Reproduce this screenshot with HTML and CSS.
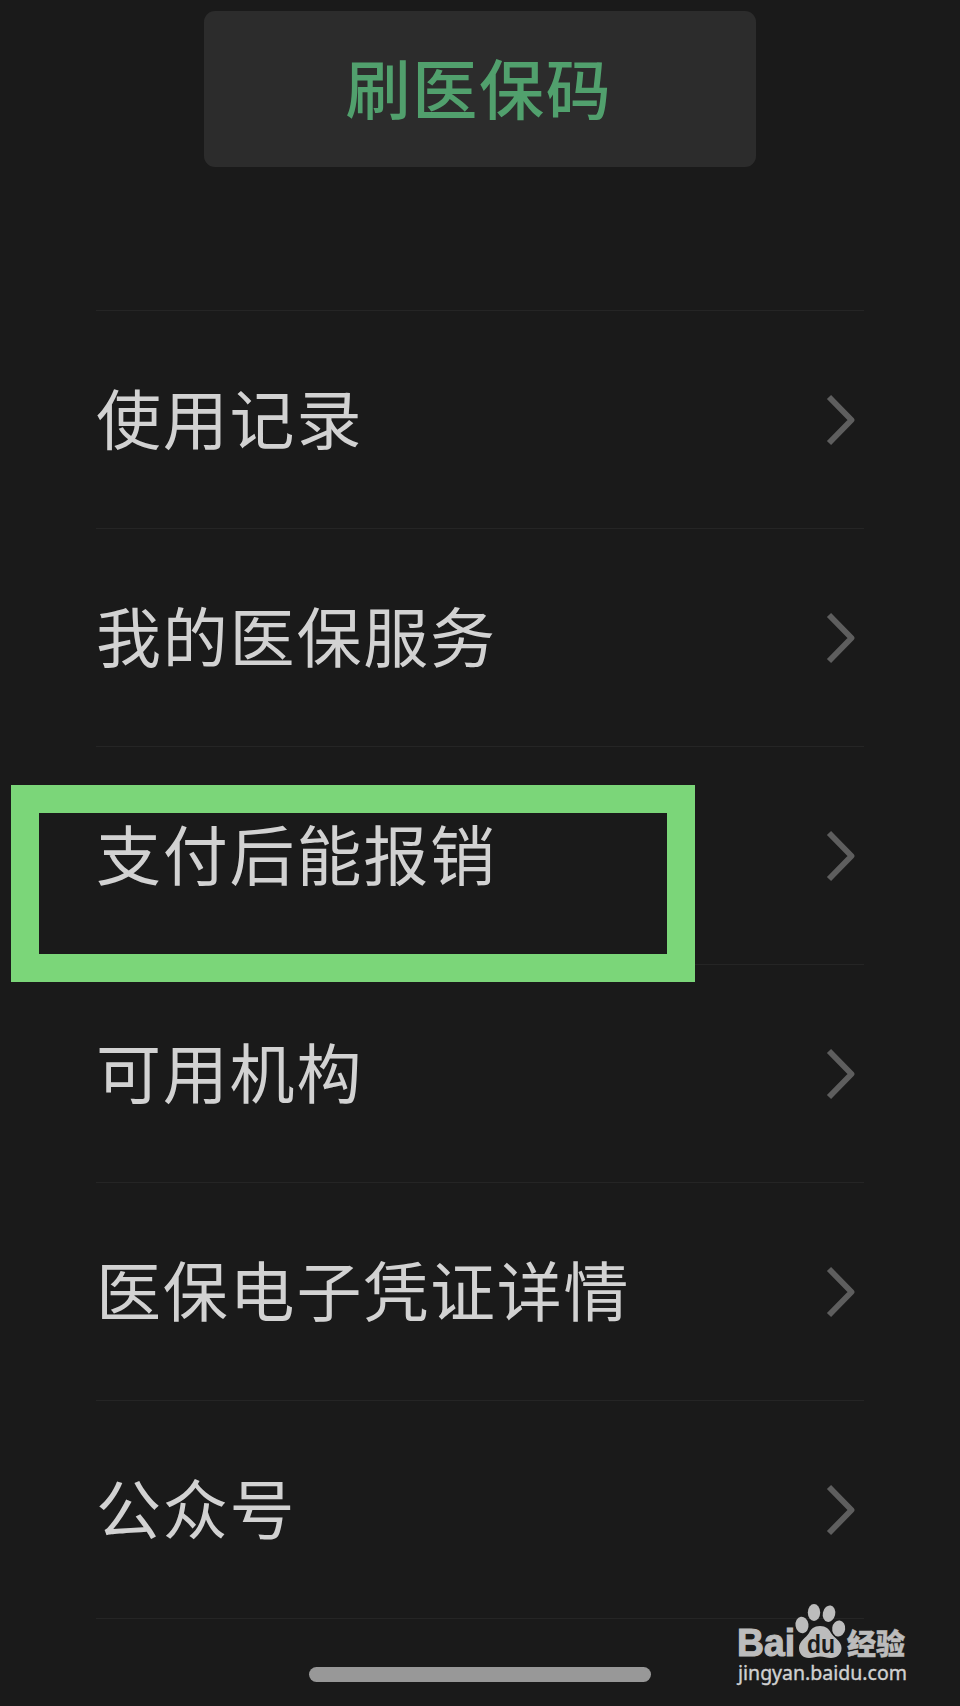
FILE: index.html
```html
<!DOCTYPE html>
<html lang="zh-CN">
<head>
    <meta charset="UTF-8">
    <title>医保电子凭证</title>
    <link rel="stylesheet" href="styles.css">
</head>
<body>
    <div class="page">
        <button type="button" class="scan-btn">刷医保码</button>

        <!-- Menu -->
        <ul class="menu">
            <li class="menu-item">
                <span class="label">使用记录</span>
                <svg class="arrow" viewBox="0 0 30 52"><path d="M3 3 L25.5 26 L3 49"/></svg>
            </li>
            <li class="menu-item">
                <span class="label">我的医保服务</span>
                <svg class="arrow" viewBox="0 0 30 52"><path d="M3 3 L25.5 26 L3 49"/></svg>
            </li>
            <li class="menu-item">
                <span class="label">支付后能报销</span>
                <svg class="arrow" viewBox="0 0 30 52"><path d="M3 3 L25.5 26 L3 49"/></svg>
                <div class="highlight"></div>
            </li>
            <li class="menu-item">
                <span class="label">可用机构</span>
                <svg class="arrow" viewBox="0 0 30 52"><path d="M3 3 L25.5 26 L3 49"/></svg>
            </li>
            <li class="menu-item">
                <span class="label">医保电子凭证详情</span>
                <svg class="arrow" viewBox="0 0 30 52"><path d="M3 3 L25.5 26 L3 49"/></svg>
            </li>
            <li class="menu-item">
                <span class="label">公众号</span>
                <svg class="arrow" viewBox="0 0 30 52"><path d="M3 3 L25.5 26 L3 49"/></svg>
            </li>
        </ul>

        <div class="home-bar"></div>

        <!-- Watermark -->
        <svg class="watermark" viewBox="0 0 200 116">
            <text class="wm-bai" x="17" y="66" textLength="58" lengthAdjust="spacingAndGlyphs">Bai</text>
            <ellipse cx="82" cy="35" rx="6.5" ry="8.3" transform="rotate(-8 82 35)"/>
            <ellipse cx="94" cy="22.5" rx="6.2" ry="8.5"/>
            <ellipse cx="109" cy="23.7" rx="6.2" ry="8.3" transform="rotate(12 109 23.7)"/>
            <ellipse cx="118.7" cy="38.5" rx="6.5" ry="8" transform="rotate(8 118.7 38.5)"/>
            <path d="M100 36 C106 36 109 39 111 43 C114 48 121.500 51 121.500 58 C121.500 64 117 68 111 68 C107 68 104 66.500 100 66.500 C96 66.500 93 68 89 68 C83 68 79 64 79 58 C79 51 86 48 89 43 C91 39 94 36 100 36 Z"/>
            <text class="wm-du" x="87" y="63" textLength="28" lengthAdjust="spacingAndGlyphs">du</text>
            <text class="wm-cn" x="127" y="65" textLength="58" lengthAdjust="spacingAndGlyphs">经验</text>
            <text class="wm-url" x="18" y="90" textLength="169" lengthAdjust="spacingAndGlyphs">jingyan.baidu.com</text>
        </svg>
    </div>
</body>
</html>
```
FILE: styles.css
```css
body {
    margin: 0;
    background-color: #1a1a1a;
    font-family: "Noto Sans CJK SC", sans-serif;
}

.page {
    position: relative;
    box-sizing: border-box;
    height: 1706px;
    padding: 11px 96px 24px;
    display: flex;
    flex-direction: column;
    overflow: hidden;
}

.scan-btn {
    align-self: center;
    width: 552px;
    height: 156px;
    padding: 0 2px 7px 0;
    border: none;
    border-radius: 11px;
    background-color: #2c2c2c;
    color: #51a06d;
    font-family: inherit;
    font-size: 65px;
    font-weight: 500;
    letter-spacing: 1.8px;
}

/* Menu list */
.menu {
    list-style: none;
    margin: 143px 0 0;
    padding: 0;
    border-top: 1px solid #252525;
}

.menu-item {
    position: relative;
    box-sizing: border-box;
    height: 218px;
    padding: 0 8px 0 0;
    display: flex;
    align-items: center;
    justify-content: space-between;
    border-bottom: 1px solid #252525;
    color: #d2d2d2;
    font-size: 65px;
    letter-spacing: 1.8px;
}

.label {
    padding-bottom: 8px;
}

.arrow {
    width: 30px;
    height: 52px;
    fill: none;
    stroke: #5e5e5e;
    stroke-width: 5.8;
    stroke-linejoin: round;
}

/* Green frame drawn over the row */
.highlight {
    position: absolute;
    left: -85px;
    top: 38px;
    box-sizing: border-box;
    width: 684px;
    height: 197px;
    border: 28px solid #7bd679;
    z-index: 1;
}

.home-bar {
    align-self: center;
    width: 342px;
    height: 15px;
    margin-top: auto;
    border-radius: 8px;
    background-color: #989898;
}

.watermark {
    position: absolute;
    left: 720px;
    top: 1590px;
    width: 200px;
    height: 116px;
    fill: #bcbcbc;
}

.wm-bai {
    font: bold 38px "Liberation Sans", sans-serif;
    stroke: #bcbcbc;
    stroke-width: 1.2;
}

.wm-du {
    font: bold 25px "Liberation Sans", sans-serif;
    fill: #1a1a1a;
}

.wm-cn {
    font: 900 29px "Noto Sans CJK SC", sans-serif;
    stroke: #bcbcbc;
    stroke-width: 0.5;
}

.wm-url {
    font: 20px "Noto Sans", sans-serif;
    fill: #d0d0d0;
    stroke: #d0d0d0;
    stroke-width: 0.4;
}
```
